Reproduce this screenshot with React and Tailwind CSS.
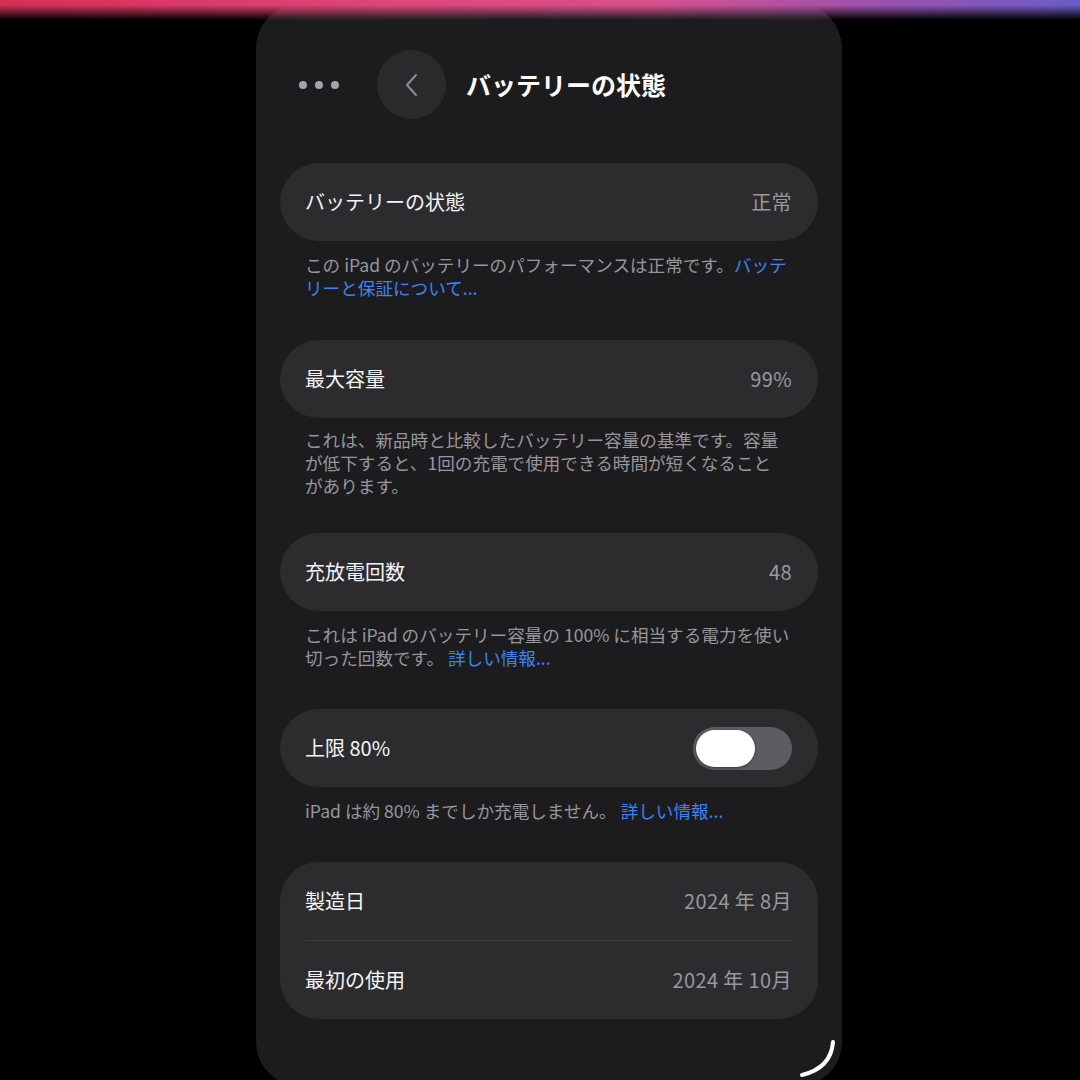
import React, { useState } from "react";

const Row = ({ label, value, children }) => (
    <div className="flex h-[78px] items-center justify-between pl-[25px] pr-[26px]">
        <span className="text-[20px] text-[#f5f5f7]">{label}</span>
        {value && <span className="text-[20px] tracking-[0.4px] text-[#98989e]">{value}</span>}
        {children}
    </div>
);

const Note = ({ lines, className = "" }) => (
    <div className={`px-[25px] text-[17.6px] leading-[23px] text-[#96969c] whitespace-nowrap ${className}`}>
        {lines.map((line, i) => (
            <div key={i}>{line}</div>
        ))}
    </div>
);

const Link = ({ children }) => <span className="text-[#3a84f4]">{children}</span>;

const App = () => {
    const [limit, setLimit] = useState(true);

    return (
        <div
            className="relative h-[1080px] w-[1080px] overflow-hidden bg-black"
            style={{ fontFamily: '"Noto Sans CJK JP", "Noto Sans", sans-serif' }}
        >
            <div className="absolute left-0 top-0 z-10 h-[20px] w-full bg-[linear-gradient(to_right,#d42f57,#de4678_35%,#d8508c_60%,#9a52b0_82%,#6a5cc8)] [mask-image:linear-gradient(to_bottom,black_25%,transparent)]" />

            <div className="relative ml-[256px] mt-[4px] h-[1082px] w-[586px] rounded-[44px] bg-[#1c1c1e] px-[24px]">
                {/* header */}
                <div className="flex items-center pt-[46px]">
                    <div className="ml-[19px] flex items-center gap-[8px]">
                        <span className="h-[8px] w-[8px] rounded-full bg-[#a5a5aa]" />
                        <span className="h-[8px] w-[8px] rounded-full bg-[#a5a5aa]" />
                        <span className="h-[8px] w-[8px] rounded-full bg-[#a5a5aa]" />
                    </div>
                    <button className="ml-[38px] flex h-[69px] w-[69px] items-center justify-center rounded-full bg-[#2a2a2d]">
                        <svg width="16" height="24" viewBox="0 0 16 24" fill="none">
                            <path d="M12 2 L3 12 L12 22" stroke="#8e8e93" strokeWidth="2" strokeLinecap="round" strokeLinejoin="round" />
                        </svg>
                    </button>
                    <h1 className="ml-[20px] text-[25px] font-bold text-white">バッテリーの状態</h1>
                </div>

                {/* battery state */}
                <div className="mt-[44px] rounded-[39px] bg-[#2c2c2e]">
                    <Row label="バッテリーの状態" value="正常" />
                </div>
                <Note
                    className="mt-[12px]"
                    lines={[
                        <>この iPad のバッテリーのパフォーマンスは正常です。<Link>バッテ</Link></>,
                        <Link>リーと保証について...</Link>,
                    ]}
                />

                {/* max capacity */}
                <div className="mt-[41px] rounded-[39px] bg-[#2c2c2e]">
                    <Row label="最大容量" value="99%" />
                </div>
                <Note
                    className="mt-[10px]"
                    lines={[
                        "これは、新品時と比較したバッテリー容量の基準です。容量",
                        "が低下すると、1回の充電で使用できる時間が短くなること",
                        "があります。",
                    ]}
                />

                {/* cycle count */}
                <div className="mt-[36px] rounded-[39px] bg-[#2c2c2e]">
                    <Row label="充放電回数" value="48" />
                </div>
                <Note
                    className="mt-[12px]"
                    lines={[
                        "これは iPad のバッテリー容量の 100% に相当する電力を使い",
                        <>切った回数です。 <Link>詳しい情報...</Link></>,
                    ]}
                />

                {/* 80% limit */}
                <div className="mt-[40px] rounded-[39px] bg-[#2c2c2e]">
                    <Row label="上限 80%">
                        <button
                            onClick={() => setLimit(!limit)}
                            className={`flex h-[43px] w-[99px] items-center rounded-full p-[3px] ${limit ? "justify-start bg-[#5c5c61]" : "justify-end bg-[#39393d]"}`}
                        >
                            <span className="h-[37px] w-[59px] rounded-full bg-white shadow-[0_1px_3px_rgba(0,0,0,0.4)]" />
                        </button>
                    </Row>
                </div>
                <Note
                    className="mt-[12px]"
                    lines={[<>iPad は約 80% までしか充電しません。 <Link>詳しい情報...</Link></>]}
                />

                {/* dates */}
                <div className="mt-[40px] rounded-[39px] bg-[#2c2c2e]">
                    <Row label="製造日" value="2024 年 8月" />
                    <div className="mx-[25px] h-px bg-[#3d3d40]" />
                    <Row label="最初の使用" value="2024 年 10月" />
                </div>

                <svg className="absolute left-[542px] top-[1034px]" width="42" height="42" viewBox="0 0 42 42" fill="none">
                    <path d="M35 4 Q33 30 4 37" stroke="white" strokeWidth="4" strokeLinecap="round" />
                </svg>
            </div>
        </div>
    );
};

export default App;
